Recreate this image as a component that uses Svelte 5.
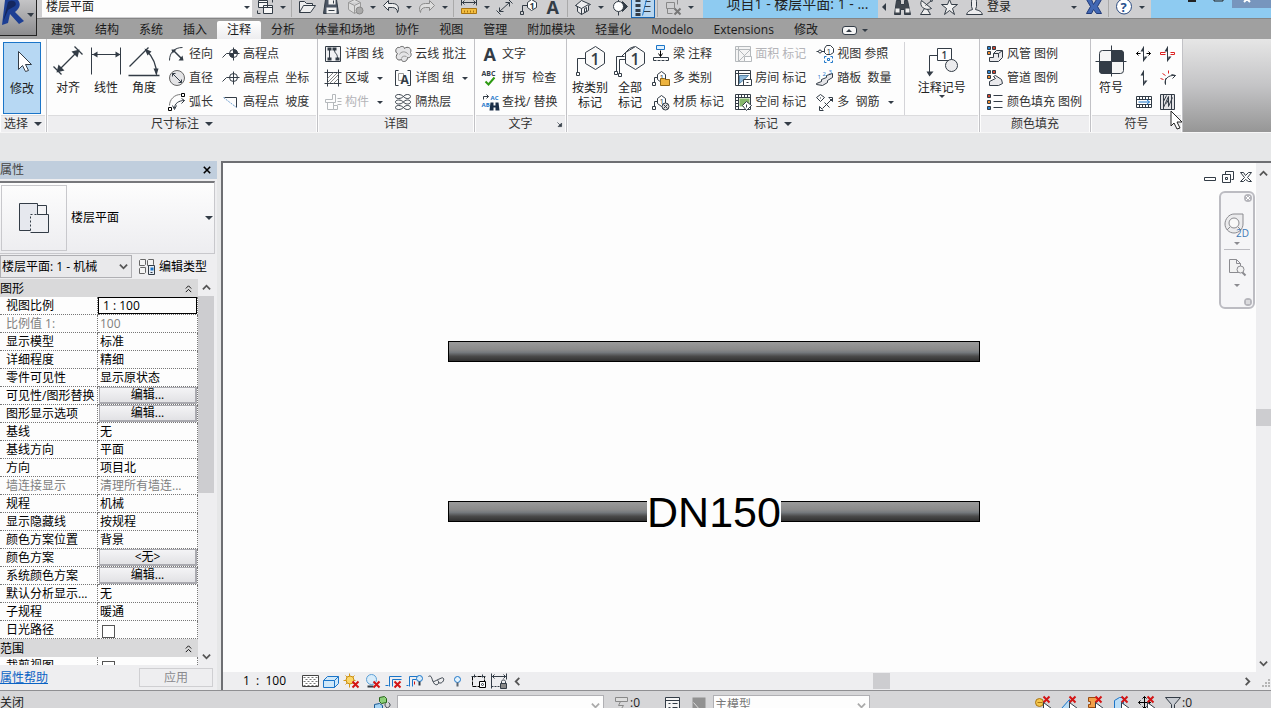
<script>
    // Inner markup of the 18x18 icons
    const icons = {
        radial: '<path d="M1 15C1 7 6 2 14 2"/><path d="M5 5l9 9" stroke-width="1.5"/><path d="M3 4l5 0-4 4zM15 15h-5l4-5z" fill="#333c46" stroke="none"/>',
        diameter: '<circle cx="8.5" cy="8.5" r="7.5" fill="#e4e4e6" stroke="#666"/><path d="M4 4l9 9M4 7V4h3M13 10v3h-3"/>',
        arc: '<path d="M1 12C1 6 6 1 12 1" stroke="#777"/><path d="M6 15c0-5 4-8 10-8M4 12l2 4 2-4M13 5l3 2-3 3"/><path d="M0 14h3v3H0zM13 0h3v3h-3z" fill="#fff" stroke="#000"/>',
        spot: '<path d="M0 12l4-4h13M11 2v13"/><circle cx="11" cy="8" r="4" fill="#fff"/><path d="M11 4a4 4 0 0 1 4 4H11zM11 12a4 4 0 0 1-4-4H11z" fill="#333c46"/>',
        spotxy: '<path d="M0 12l4-4h13M11 2v13"/><circle cx="11" cy="8" r="4"/>',
        slope: '<path d="M2 4h12v10"/><path d="M1 4l13 10" stroke="#6f9fd0" stroke-dasharray="2 1"/>',
        detailline: '<path d="M1 1h15v15H1z" fill="#f1f1f3"/><path d="M5 4v9M10 4c0 5 3 3 3 9"/><path d="M3 2h4v3H3zM3 12h4v3H3zM8 2h4v3H8zM11 12h4v3h-4z" fill="#333c46" stroke="none"/>',
        region: '<path d="M3 0v17M14 0v17M0 3h17M0 14h17"/><path d="M3 9l6-6M3 13L13 3M5 14l9-9M9 14l5-5" stroke="#888"/>',
        component: '<path d="M8 1h3v8H1V6h7zM13 5h4M13 8h4M13 11h4M3 9v7h6V9M9 12h4v4H9"/>',
        cloud: '<path d="M3 8C0 7 1 1 5 2c2-2 5-1 5 1 3-3 8 0 6 4 2 3-1 6-3 5 0 5-6 5-6 2-4 2-7-2-4-6z" fill="#e4e4e6" stroke="#666"/><path d="M5 9c1-3 6-4 9 0M7 13c0-2 3-3 5-2" stroke="#999"/>',
        group: '<path d="M4 1H1v15h3M13 1h3v15h-3"/><path d="M4 4h5v7H4z" stroke="#999"/><text x="6" y="14" font-size="12" font-weight="700" fill="#333c46" stroke="none">A</text>',
        insul: '<path d="M4 1c-4 0-4 4 0 4 5 0 5-4 9-4 4 0 4 4 0 4-4 0-4-4-9-4M4 6.500c-4 0-4 4 0 4 5 0 5-4 9-4 4 0 4 4 0 4-4 0-4-4-9-4M4 12c-4 0-4 4 0 4 5 0 5-4 9-4 4 0 4 4 0 4-4 0-4-4-9-4"/>',
        letter: '<text x="2" y="15" font-size="18" font-weight="700" fill="#333c46" stroke="none">A</text>',
        spell: '<text x="0" y="6" font-size="7" font-weight="700" fill="#333c46" stroke="none">ABC</text><path d="M4 12l3 3 6-7" stroke="#2d9a12" stroke-width="2"/>',
        find: '<path d="M2 6V3h5M5 1l2 2-2 2"/><g stroke="none" font-weight="700" fill="#1b75c8"><text x="9" y="6" font-size="6">AC</text><text x="0" y="13" font-size="6">AB</text></g><path d="M9 9h3v3h2V9h3l1 8h-4v-3h-2v3H8z" fill="#1c2f48" stroke="none"/>',
        beam: '<path d="M4 0h8v4H4z" fill="#e2f1fc" stroke="#1b75c8"/><path d="M8 5v6M6 8l2 3 2-3" stroke="#000"/><path d="M1 15h15" stroke-dasharray="3 1"/><path d="M1 12h15v3M1 12v3"/>',
        multi: '<path d="M2 13V8h4M0 13h3v3H0z"/><path d="M5 5l4-3 4 3v5l-4 3-4-3z" fill="#fff"/><text x="7" y="10" font-size="8" fill="#333c46" stroke="none">1</text><path d="M8 9h4l1 1h4v6H8z" fill="#edb33e" stroke="#8e6514"/>',
        material: '<path d="M2 13V8h4M0 13h3v3H0z"/><path d="M5 5l4-3 4 3v5l-4 3-4-3z" fill="#fff"/><text x="7" y="10" font-size="8" fill="#333c46" stroke="none">1</text><circle cx="13" cy="13" r="3.500" fill="#ddd"/><path d="M11 11l4 4M15 11l-4 4"/>',
        area: '<path d="M1 1h15v15H1zM1 4h15M4 1v15M4 4l12 12M16 4L4 16" fill="#e4e4e4"/><path d="M10 11h7v5h-7z" fill="#fff"/>',
        room: '<path d="M1 1h15v15H1z" fill="#fff"/><path d="M4 1v15M1 4h15"/><path d="M5 6h9l-9 8z" fill="#8db8da" stroke="#5a86a8"/><path d="M9 10h8v6H9z" fill="#fff"/><path d="M12 13h2"/>',
        space: '<path d="M1 1h15v15H1z" fill="#fff"/><path d="M4 1v15M1 4h15M1 7h3M1 10h3M1 13h3M7 1v3M10 1v3M13 1v3"/><path d="M5 5h10v8H5z" fill="#86b66b" stroke="none"/><path d="M12 8l5 4-5 5-4-5z" fill="#fff"/><path d="M12 11v3"/>',
        viewref: '<path d="M0 6h2M5 6h3"/><circle cx="3.500" cy="6" r="1.500"/><path d="M10 0h4l3 3v4l-3 2h-4L8 7V3z" fill="#fff"/><text x="10" y="8" font-size="8" fill="#333c46" stroke="none">1</text><path d="M8 13v-2h2M14 11h2v2M16 15v2h-2M10 17H8v-2M11 13h2v2h-2z" stroke="#1b75c8"/>',
        tread: '<path d="M0 14l5-2v-2l5-2V6l6-2v4l-5 3v2l-5 3-6-1z" fill="#e6e6e9"/><g font-size="6" fill="#1b75c8" stroke="none"><text x="1" y="9">1</text><text x="6" y="6">2</text><text x="12" y="4">3</text></g>',
        rebar: '<path d="M4 1l4 3-4 4-4-4zM6 15L16 5M3 13l3 3M13 5l3 3M8 9l5 5M4 4v1"/><path d="M12 4l4 0-0 4M3 13v4h4"/>',
        duct: '<path d="M1 1h3v3H1z" fill="#2a83cf"/><path d="M6 1h3v3H6z" fill="#d2452f"/><path d="M1 6h3v3H1z" fill="#ef8b2c"/><path d="M7 8l3-3h6v7l-4 4H3v-4h4zM7 8h5v4M12 8l4-3" fill="#e9e9ec"/>',
        pipe: '<path d="M1 1h3v3H1z" fill="#2a83cf"/><path d="M6 1h3v3H6z" fill="#d2452f"/><path d="M1 6h3v3H1z" fill="#ef8b2c"/><path d="M3 12l6-3-2-2 2-1 6 4 1 4-4 2H3z" fill="#e9e9ec"/>',
        legend: '<path d="M1 1h3v3H1z" fill="#d2452f"/><path d="M1 7h3v3H1z" fill="#ef8b2c"/><path d="M1 13h3v3H1z" fill="#2a83cf"/><path d="M7 2h9M7 8h9M7 14h9"/>',
        stairs: '<path d="M8 1v15"/><path d="M8 1v5H5zM9 11h3l-4 5z" fill="#333c46" stroke="none"/><path d="M5 8H1M3 6L1 8l2 2M11 8h4M13 6l2 2-2 2" stroke="#000"/>',
        stairs2: '<path d="M8 1v15"/><path d="M8 1v5H5zM9 11h3l-4 5z" fill="#333c46" stroke="none"/><path d="M6 7H1v2h5M11 7h4v2h-4" stroke="#d22"/>',
        span: '<path d="M8 1v15"/><path d="M8 1v5H5zM9 11h3l-4 5z" fill="#333c46" stroke="none"/>',
        spanred: '<path d="M6 15c-2-5 3-10 10-9M6 15V9M13 9l3-3-4-1"/><path d="M1 9l3 1M3 4l3 2M9 1v3" stroke="#d22"/>',
        path: '<path d="M1 3h15v11H1z" fill="#fff"/><path d="M1 6h15M1 11h15M4 3v3M7 3v3M10 3v3M13 3v3M4 11v3M7 11v3M10 11v3M13 11v3"/><path d="M3 8.500h11M11 6l3 2.500-3 2.500" stroke="#1b75c8"/>',
        fabric: '<path d="M1 1h14v15H1z" fill="#e2e2e5"/><path d="M4 1v15M12 1v15M4 14L9 3v10l4-9M7 10l2-4M4 8l3-6"/>',
        // quick access
        windows: '<path d="M2 2h9v7H2zM7 7h9v8H7z" fill="#f7f7f7"/><path d="M2 4h9M7 9h9M14 1h2v3M1 12v3h3"/>',
        open: '<path d="M1 14V3h5l2 2h6v2M1 14l4-7h12l-5 7z" fill="#eee"/>',
        save: '<path d="M3 1h11l2 14H1z" fill="#4b5563"/><path d="M6 1h7v5H6zM4 9h10v6H4z" fill="#f2f2f2" stroke="none"/><path d="M6 12h6M11 2v3"/>',
        sync: '<path d="M8 1l6 3v7l-6 4-6-4V4zM2 4l6 3 6-3M8 7v8" fill="#ddd" stroke="#999"/><circle cx="13" cy="12" r="3.500" fill="#aaa" stroke="#888"/>',
        undo: '<path d="M1 7l5-5v3h4c6 0 7 5 5 9 0-3-2-5-5-5H6v3z" fill="#eee"/>',
        redo: '<path d="M16 7l-5-5v3H7C1 5 0 10 2 14c0-3 2-5 5-5h4v3z" fill="#ddd" stroke="#8a8a8a"/>',
        ruler: '<path d="M1 4h15M1 1v6M16 1v6M4 2L2 4l2 2M13 2l2 2-2 2"/><path d="M1 10h15v5H1z" fill="#f3bd3f" stroke="#a87411"/><path d="M4 12v2M7 12v2M10 12v2M13 12v2" stroke="#a87411"/>',
        aligned: '<path d="M0 12l4 4M12 1l4 4M3 13L13 4M3 9v4h4M9 4h4v4"/>',
        tag: '<path d="M2 13V7h5M0 13h3v3H0z"/><path d="M7 4l4-3 5 3v5l-5 3-4-3z" fill="#fff"/><text x="9" y="10" font-size="9" font-weight="700" fill="#333c46" stroke="none">1</text>',
        house: '<path d="M1 7l6-5 9 4-2 1v5l-7 4-4-3V8z" fill="#ececee"/><path d="M1 7l6 3 7-4M7 10v6M10 10v4l2-1v-4z"/>',
        section: '<path d="M8 1v3M8 13v4"/><path d="M12 3l5 5-5 5z" fill="#333c46"/><circle cx="8" cy="8" r="5" fill="#fff"/>',
        thin: '<path d="M1 2h5M1 7h5M1 12h5M1 16h5" stroke-width="3"/><path d="M11 3h5M10 8h6M9 13h7"/><path d="M12 1L8 17" stroke="#1b75c8"/>',
        closehidden: '<path d="M2 4h8v6H2zM5 1h8v5M3 10v5h5" stroke="#888"/><path d="M10 10l6 6M16 10l-6 6" stroke="#777" stroke-width="2"/>',
        binoc: '<path d="M3 2h4v4h4V2h3l3 14h-6v-5H7v5H1z" fill="#40474f"/><path d="M2 10h4v4H2zM12 10h4v4h-4z" fill="#eee" stroke="none"/>',
        dish: '<path d="M4 2c-3 6 4 11 10 8zM8 7l6-5M7 10l-4 6h10l-3-5" fill="#eee"/><circle cx="14" cy="2" r="1"/>',
        star: '<path d="M8 1l2 5h6l-5 4 2 6-5-4-5 4 2-6-5-4h6z" fill="#f1f1f1"/>',
        person: '<path d="M6 3c0-4 5-4 5 0v5l-1 3c4 1 6 2 7 5H1c1-3 3-4 6-5L6 8z" fill="#ececee"/>',
        exchange: '<path d="M1 1h5l2 5 3-5h5l-4 7 4 7h-5l-3-4-2 4H1l4-7z" fill="#4268b4" stroke="#203a78"/>',
        help: '<circle cx="8.500" cy="8" r="7.500" fill="#fff" stroke="#2a4a80"/><text x="5" y="13" font-size="13" font-weight="700" fill="#27508f" stroke="none">?</text>',
        // palette
        edittype: '<path d="M1 2l1-1h5v5l-1 1H1zM9 2l1-1h5v5l-1 1H9zM1 10l1-1h5v5l-1 1H1z" fill="#f4f4f4" stroke="#666"/><path d="M10 7h6v9h-6z" fill="#e7edf5"/><path d="M12 9h3v3h-3z" fill="#1b75c8" stroke="none"/><path d="M12 14h2"/>',
        // view control bar
        coarse: '<path d="M1 3h16v11H1z" fill="#fff" stroke="#444"/><path d="M2 5h14M2 9h14M2 13h14" stroke="#777" stroke-dasharray="2 2"/><path d="M4 7h12M4 11h12" stroke="#777" stroke-dasharray="2 2"/>',
        box: '<path d="M1 8l4-4h11v7l-4 4H1z" fill="#cfe8fa" stroke="#1b75c8"/><path d="M1 8h11v7M12 8l4-4" stroke="#1b75c8"/>',
        sun: '<path d="M6 1v14M0 8h12M2 3l9 9M11 3L2 12" stroke="#d69a1a"/><circle cx="6.500" cy="7.500" r="4" fill="#fbd769" stroke="#c98d10"/><path d="M9 9l6 6M15 9l-6 6" stroke="#d31515" stroke-width="2"/>',
        shadow: '<circle cx="7" cy="7" r="5" fill="#d8ecfa" stroke="#5b9fd6"/><path d="M3 14h6" stroke-width="2"/><path d="M9 9l6 6M15 9l-6 6" stroke="#d31515" stroke-width="2"/>',
        crop: '<path d="M0 13h3M4 14V4h12M7 14V7h9" stroke="#1b75c8"/><path d="M9 9l6 6M15 9l-6 6" stroke="#d31515" stroke-width="2"/>',
        cropshow: '<path d="M0 13h2M3 14V4h8M6 14V7h4" stroke="#1b75c8"/><circle cx="13" cy="6" r="3" fill="#d8ecfa" stroke="#1b75c8"/><path d="M8 9v3" stroke="#d31515"/><path d="M13 9v4" stroke-width="2"/>',
        glasses: '<path d="M1 4c3-2 3 2 5 6s6 2 5-1-3 0-5 0M11 10c3 2 6-2 5-4s-4 1-6 1"/>',
        bulb: '<circle cx="9" cy="7" r="3" fill="#e5f3fd" stroke="#1b75c8"/><path d="M9 10v4" stroke="#5a6570" stroke-width="2"/>',
        temp: '<path d="M3 4h12v10H3z" stroke="#000" stroke-dasharray="4 1"/><path d="M10 9h6v6h-6z" fill="#fff" stroke="#000"/><circle cx="13" cy="12" r="1"/><path d="M2 4h4M12 4h4M5 2v3M13 2v3"/>',
        lockdim: '<path d="M1 1v15M16 1v6M1 4h15M4 2L2 4l2 2M13 2l2 2-2 2"/><path d="M1 14h8" stroke-dasharray="2 1"/><path d="M10 11h6v5h-6z" fill="#888"/><path d="M11 11V9c0-2 4-2 4 0v2"/>',
        // status bar
        worksets: '<path d="M6 2l5-1 2 2v4l-5 1-2-2z" fill="#8ccf78" stroke="#28641b"/><path d="M1 9l5-1 3 2v6l-5 1-3-2z" fill="#a6d3f2" stroke="#1b5b95"/><path d="M12 8c-2 3 3 4 3 8M15 7c3 2 1 5-1 5"/>',
        editable: '<path d="M3 2h12v4H3zM8 6l-2 4h5l-4 6" stroke="#888" fill="#ddd"/>',
        design: '<path d="M2 2h14v14H2z" fill="#f5f5f5"/><path d="M2 5h14M5 8h2M9 8h5M5 12h2M9 12h5"/>',
        addset: '<path d="M3 2h13v15H3z" fill="#919191" stroke="none"/><path d="M4 7l7 8" stroke="#ddd"/>',
        link: '<circle cx="5" cy="7" r="4" fill="#f5c64c" stroke="#a87411"/><path d="M3 7h5" stroke="#a87411"/>',
        underlay: '<path d="M1 13l8-9v9z" fill="#b9dcf5" stroke="#1b75c8"/>',
        pinned: '<path d="M2 2h9v4H9v3h2v3H2V9h2V6H2z" fill="#f2a04a" stroke="#9a4c10"/>',
        face: '<path d="M2 5l5-3h4v13H2z" fill="#b9dcf5" stroke="#1b75c8"/>',
        drag: '<path d="M6 1v12M0 7h12M4 3l2-2 2 2M4 11l2 2 2-2M2 5L0 7l2 2M10 5l2 2-2 2" stroke="#000"/>',
        filter: '<path d="M1 2h15l-6 7v8l-3-2V9z" fill="#c7cbd1"/>',
        mark: '<path d="M9 1l6 6M15 1L9 7" stroke="#d31515" stroke-width="2"/><path d="M9 7v10l3-3 2 4 1-1-1-4h3z" fill="#fff"/>',
        zoompage: '<path d="M1 1h7l4 4v9H1zM8 1v4h4" fill="#f2f2f2" stroke="#8b8b90"/><circle cx="12" cy="11" r="3.500" fill="#f2f2f2" stroke="#8b8b90"/><path d="M14 14l3 3" stroke="#8b8b90" stroke-width="2"/>'
    };

    // Inner markup of the 32x32 icons
    const bigIcons = {
        modify: '<path d="M12 5v18l4-4 3 6 3-1-3-6h6z" fill="#fff"/>',
        align: '<path d="M1 21l8 8M22 1l8 8M6 25L25 6" stroke-width="1.3"/><path d="M4 27l2-8 6 6zM27 4l-8 2 6 6z" fill="#333c46" stroke="none"/>',
        linear: '<path d="M1 2v27M30 2v27M1 9h29"/><path d="M2 9l5-3v6zM30 9l-5-3v6z" fill="#333c46" stroke="none"/>',
        angle: '<path d="M1 21L20 2M0 30h31M18 5c6 6 10 14 10 24" stroke-width="1.3"/><path d="M16 3l7 3-4 4zM28 30l-3-7h5z" fill="#333c46" stroke="none"/>',
        bycat: '<path d="M3 27V13h9M2 27h3v3H2z"/><path d="M11 7l10-6 9 6v11l-9 6-10-6z" fill="#fafafa"/><text x="16" y="19" font-size="16" font-weight="600" fill="#333c46" stroke="none">1</text>',
        all: '<path d="M2 27V11h8M5 28V14h8M7 11l8-8 5-2"/><path d="M0 26h3v3H0zM4 28h3v3H4z" fill="#fff"/><path d="M11 7l10-6 9 6v11l-9 6-10-6z" fill="#fafafa"/><text x="16" y="19" font-size="16" font-weight="600" fill="#333c46" stroke="none">1</text>',
        keynote: '<path d="M3 27V10h8"/><path d="M3 31l-3-5h7z" fill="#333c46" stroke="none"/><path d="M11 3h14v12H11z" fill="#fff"/><text x="15" y="13" font-size="10" font-weight="600" fill="#333c46" stroke="none">1</text><circle cx="25" cy="20" r="6" fill="#ececee"/>',
        symbol: '<rect x="4" y="5" width="24" height="23" rx="3" fill="#f5f5f5"/><path d="M16 5h9q3 0 3 3v8H16zM4 16h12v12H7q-3 0-3-3z" fill="#333c46"/><path d="M16 0v31M0 16h31"/>',
        view: '<path d="M1 1h18v27H1z" fill="#e6e8ee"/><path d="M19 3h9v10" fill="#f2f2f4"/><path d="M12 12h18v18H12z" fill="#eeeff3" stroke="none"/><path d="M30 12v18H12M19 12h11"/><path d="M12 28V12h8M19 3v9" stroke-dasharray="2 2"/>'
    };

    const quick = [
        { icon: 'windows', menu: true }, 'sep',
        { icon: 'open' }, { icon: 'save' }, { icon: 'sync', menu: true },
        { icon: 'undo', menu: true }, { icon: 'redo', menu: true }, 'sep',
        { icon: 'ruler', menu: true }, { icon: 'aligned' }, { icon: 'tag' }, { icon: 'letter' }, 'sep',
        { icon: 'house', menu: true }, { icon: 'section' }, { icon: 'thin', on: true }, 'sep',
        { icon: 'closehidden', menu: true }
    ];

    const tabs = ['建筑', '结构', '系统', '插入', '注释', '分析', '体量和场地', '协作', '视图', '管理', '附加模块', '轻量化', 'Modelo', 'Extensions', '修改'];
    let activeTab = '注释';

    const dims = [
        [['radial', '径向'], ['diameter', '直径'], ['arc', '弧长']],
        [['spot', '高程点'], ['spotxy', '高程点  坐标'], ['slope', '高程点  坡度']]
    ];
    const details = [
        [['detailline', '详图 线'], ['region', '区域', 'menu'], ['component', '构件', 'menu off']],
        [['cloud', '云线 批注'], ['group', '详图 组', 'menu'], ['insul', '隔热层']]
    ];
    const texts = [[['letter', '文字'], ['spell', '拼写  检查'], ['find', '查找/ 替换']]];
    const tags = [
        [['beam', '梁 注释'], ['multi', '多 类别'], ['material', '材质 标记']],
        [['area', '面积 标记', 'off'], ['room', '房间 标记'], ['space', '空间 标记']],
        [['viewref', '视图 参照'], ['tread', '踏板  数量'], ['rebar', '多  钢筋', 'menu']]
    ];
    const fills = [[['duct', '风管 图例'], ['pipe', '管道 图例'], ['legend', '颜色填充 图例']]];
    const symbols = ['stairs', 'stairs2', 'span', 'spanred', 'path', 'fabric'];

    const props = [
        { group: '图形' },
        { name: '视图比例', value: '1 : 100', kind: 'input' },
        { name: '比例值 1:', value: '100', off: true },
        { name: '显示模型', value: '标准' },
        { name: '详细程度', value: '精细' },
        { name: '零件可见性', value: '显示原状态' },
        { name: '可见性/图形替换', value: '编辑...', kind: 'button' },
        { name: '图形显示选项', value: '编辑...', kind: 'button' },
        { name: '基线', value: '无' },
        { name: '基线方向', value: '平面' },
        { name: '方向', value: '项目北' },
        { name: '墙连接显示', value: '清理所有墙连...', off: true },
        { name: '规程', value: '机械' },
        { name: '显示隐藏线', value: '按规程' },
        { name: '颜色方案位置', value: '背景' },
        { name: '颜色方案', value: '<无>', kind: 'button' },
        { name: '系统颜色方案', value: '编辑...', kind: 'button' },
        { name: '默认分析显示...', value: '无' },
        { name: '子规程', value: '暖通' },
        { name: '日光路径', kind: 'check' },
        { group: '范围' },
        { name: '裁剪视图', kind: 'check' }
    ];

    const viewTools = ['coarse', 'box', 'sun', 'shadow', 'crop', 'cropshow', 'glasses', 'bulb', 'temp', 'lockdim'];
    const selectTools = ['link', 'underlay', 'pinned', 'face', 'drag'];
</script>

{#snippet icon(name)}
    <svg class="icon" viewBox="-0.5 -0.5 18 18" aria-hidden="true">{@html icons[name]}</svg>
{/snippet}

{#snippet arrow(d)}
    <svg class="chevron" viewBox="0 0 10 10" aria-hidden="true"><path {d} /></svg>
{/snippet}

{#snippet big(name, lines, menu)}
    <button class="big">
        <svg viewBox="-0.5 -0.5 32 32" aria-hidden="true">{@html bigIcons[name]}</svg>
        {#each lines as line}<span>{line}</span>{/each}
        {#if menu}<i class="caret small"></i>{/if}
    </button>
{/snippet}

{#snippet columns(cols)}
    {#each cols as col}
        <div class="tools">
            {#each col as [name, label, flags = '']}
                <button class="tool" disabled={flags.includes('off')}>
                    {@render icon(name)}<span>{label}</span>
                    {#if flags.includes('menu')}<i class="caret small"></i>{/if}
                </button>
            {/each}
        </div>
    {/each}
{/snippet}

<div class="app">
    <header>
        <button class="app-button" aria-label="R">
            <svg viewBox="0 0 36 35" aria-hidden="true">
                <path d="M5 0h13c3 4 2 8-3 12l9 9-5 3-9-10-2 9-6 2z" fill="#1d3f94" />
                <path d="M8 2c4-3 10 0 7 4l-7 4-5 12z" fill="#14275f" />
                <path d="M27 13h7l-3 4z" fill="#333c46" />
            </svg>
        </button>
        <div class="bars">
            <div class="quick">
                <div class="search">
                    <select aria-label="视图"><option>楼层平面</option></select>
                    <i class="caret small"></i>
                </div>
                {#each quick as q}
                    {#if q === 'sep'}
                        <span class="sep"></span>
                    {:else}
                        <button class="q" class:on={q.on} aria-label={q.icon}>{@render icon(q.icon)}</button>
                        {#if q.menu}<button class="drop" aria-label="menu"><i class="caret small"></i></button>{/if}
                    {/if}
                {/each}
                <div class="title">项目1 - 楼层平面: 1 - ...</div>
                <button class="drop" aria-label="back"><i class="caret back"></i></button>
                {#each ['binoc', 'dish', 'star', 'person'] as name}
                    <button class="q" aria-label={name}>{@render icon(name)}</button>
                {/each}
                <button class="login"><span>登录</span><i class="caret small"></i></button>
                <button class="q" aria-label="exchange">{@render icon('exchange')}</button>
                <span class="sep"></span>
                <button class="q" aria-label="help">{@render icon('help')}</button>
                <button class="drop" aria-label="menu"><i class="caret small"></i></button>
                <div class="window">
                    <button aria-label="最小化"><svg viewBox="0 0 10 10"><path d="M1-1h8v3H1z" fill="#222" stroke="none" /></svg></button>
                    <button aria-label="最大化"><svg viewBox="0 0 10 10"><path d="M0-4h9v5H0z" fill="none" stroke="#222" /></svg></button>
                    <button class="close" aria-label="关闭"><svg viewBox="0 0 10 10"><path d="M2-4l6 6M8-4L2 2" stroke="#fff" stroke-width="2" /></svg></button>
                </div>
            </div>
            <nav class="tabs">
                {#each tabs as tab}
                    <button class:active={tab === activeTab} on:click={() => (activeTab = tab)}>{tab}</button>
                {/each}
                <button class="fold" aria-label="fold"><b><i class="caret up"></i></b><i class="caret small"></i></button>
            </nav>
        </div>
    </header>

    <div class="ribbon">
        <section class="panel select">
            <div class="body">{@render big('modify', ['修改'])}</div>
            <h2>选择 <i class="caret"></i></h2>
        </section>
        <section class="panel dim">
            <div class="body">
                <div class="bigs">
                    {@render big('align', ['对齐'])}{@render big('linear', ['线性'])}{@render big('angle', ['角度'])}
                </div>
                {@render columns(dims)}
            </div>
            <h2>尺寸标注 <i class="caret"></i></h2>
        </section>
        <section class="panel detail">
            <div class="body">{@render columns(details)}</div>
            <h2>详图</h2>
        </section>
        <section class="panel text">
            <div class="body">{@render columns(texts)}</div>
            <h2>文字
                <svg class="launch" viewBox="0 0 10 10" aria-hidden="true"><path d="M2 2l5 5M8 3v5H3z" fill="#333c46" /></svg>
            </h2>
        </section>
        <section class="panel tag">
            <div class="body">
                <div class="bigs">
                    {@render big('bycat', ['按类别', '标记'])}{@render big('all', ['全部', '标记'])}
                </div>
                {@render columns(tags)}
                <div class="note">{@render big('keynote', ['注释记号'], true)}</div>
            </div>
            <h2>标记 <i class="caret"></i></h2>
        </section>
        <section class="panel fill">
            <div class="body">{@render columns(fills)}</div>
            <h2>颜色填充</h2>
        </section>
        <section class="panel symbol">
            <div class="body">
                {@render big('symbol', ['符号'])}
                <div class="grid">
                    {#each symbols as name}
                        <button class="q" aria-label={name}>{@render icon(name)}</button>
                    {/each}
                </div>
            </div>
            <h2>符号</h2>
            <svg class="cursor" viewBox="0 0 13 20" aria-hidden="true"><path d="M1 1v15l3-3 3 6 3-1-3-6h5z" fill="#fff" stroke="#222" /></svg>
        </section>
    </div>
    <div class="options"></div>

    <main>
        <aside>
            <div class="caption"><span>属性</span><button aria-label="关闭">
                <svg viewBox="0 0 10 10"><path d="M1 1l8 8M9 1L1 9" stroke="#000" stroke-width="2" /></svg>
            </button></div>
            <button class="type">
                <span class="thumb"><svg viewBox="-0.5 -0.5 32 32">{@html bigIcons.view}</svg></span>
                <span class="type-name">楼层平面</span><i class="caret"></i>
            </button>
            <div class="instance">
                <div class="pick">
                    <select aria-label="实例"><option>楼层平面: 1 - 机械</option></select>
                    {@render arrow('M1 3l4 4 4-4')}
                </div>
                <button>{@render icon('edittype')}<span>编辑类型</span></button>
            </div>
            <div class="list">
                <div class="rows">
                    <table>
                        <colgroup><col class="names" /><col /></colgroup>
                        <tbody>
                            {#each props as p, i}
                                {#if p.group}
                                    <tr class="group"><th colspan="2"><div>{p.group}{@render arrow('M2 5l3-3 3 3M2 9l3-3 3 3')}</div></th></tr>
                                {:else}
                                    <tr class:off={p.off}>
                                        <td><label for="p{i}">{p.name}</label></td>
                                        <td class={p.kind}>
                                            {#if p.kind === 'input'}
                                                <input id="p{i}" value={p.value} />
                                            {:else if p.kind === 'button'}
                                                <button id="p{i}">{p.value}</button>
                                            {:else if p.kind === 'check'}
                                                <input id="p{i}" type="checkbox" />
                                            {:else}
                                                <output id="p{i}">{p.value}</output>
                                            {/if}
                                        </td>
                                    </tr>
                                {/if}
                            {/each}
                        </tbody>
                    </table>
                </div>
                <div class="scroll">
                    {@render arrow('M1 7l4-4 4 4')}
                    <div class="track"><div class="thumb-long"></div></div>
                    {@render arrow('M1 3l4 4 4-4')}
                </div>
            </div>
            <div class="foot"><a href="#help">属性帮助</a><button disabled>应用</button></div>
        </aside>

        <div class="view">
            <div class="upper">
                <div class="canvas">
                    <div class="pipe first"></div>
                    <div class="pipe second"><span>DN150</span></div>
                    <div class="view-buttons">
                        <button aria-label="最小化"><svg viewBox="-0.5 -0.5 14 12"><path d="M1 6h11v3H1z" fill="#fff" /></svg></button>
                        <button aria-label="还原"><svg viewBox="-0.5 -0.5 14 12"><path d="M4 3V0h8v8h-2M1 3h8v8H1zM4 6h2v2H4z" /></svg></button>
                        <button aria-label="关闭"><svg viewBox="-0.5 -0.5 14 12"><path d="M1 1h3l2 3 3-3h3L8 6l4 4H9L6 8l-2 2H1l4-4z" /></svg></button>
                    </div>
                    <div class="navbar">
                        <svg class="dot" viewBox="0 0 10 10"><circle cx="5" cy="5" r="4" /><path d="M3 3l4 4M7 3L3 7" stroke="#fff" /></svg>
                        <button aria-label="2D">
                            <svg viewBox="0 0 26 26">
                                <path d="M10 1h9v10c0 5-4 9-9 9s-9-4-9-9 4-10 9-10z" fill="#ebebed" stroke="#8b8b90" />
                                <circle cx="10" cy="10" r="5" fill="#f8f8f8" stroke="#8b8b90" />
                                <path d="M6 14l-3 3M14 14l3 3" stroke="#8b8b90" />
                                <text x="12" y="24" font-size="10" fill="#3d79b5">2D</text>
                            </svg>
                        </button>
                        <i class="caret small"></i>
                        <hr />
                        <button class="zoom" aria-label="缩放">{@render icon('zoompage')}</button>
                        <i class="caret small"></i>
                        <svg class="dot end" viewBox="0 0 10 10"><circle cx="5" cy="5" r="4" /><path d="M3 4h4M3 6h4" stroke="#fff" /></svg>
                    </div>
                </div>
                <div class="scroll">
                    {@render arrow('M1 7l4-4 4 4')}
                    <div class="track middle"><div class="thumb-short"></div></div>
                    {@render arrow('M1 3l4 4 4-4')}
                </div>
            </div>
            <div class="view-bar">
                <span class="scale">1  :  100</span>
                {#each viewTools as name}
                    <button aria-label={name}>{@render icon(name)}</button>
                {/each}
                {@render arrow('M7 1L3 5l4 4')}
                <div class="h-track"><div class="h-thumb"></div></div>
                {@render arrow('M3 1l4 4-4 4')}
                <svg class="grip" viewBox="0 0 10 10"><path d="M7 1h2M4 4h2M7 4h2M1 7h2M4 7h2M7 7h2" stroke="#b5b5b5" stroke-width="2" /></svg>
            </div>
        </div>
    </main>

    <footer>
        <span class="message">关闭</span>
        <button aria-label="worksets">{@render icon('worksets')}</button>
        <div class="pick workset">
            <select aria-label="工作集"><option></option></select>
            {@render arrow('M1 3l4 4 4-4')}
        </div>
        <button class="count">{@render icon('editable')}<span>:0</span></button>
        <button aria-label="design">{@render icon('design')}</button>
        <button aria-label="addset">{@render icon('addset')}</button>
        <div class="pick model">
            <select aria-label="设计选项"><option>主模型</option></select>
            {@render arrow('M1 3l4 4 4-4')}
        </div>
        <div class="selection">
            {#each selectTools as name}
                <button aria-label={name}><svg class="icon" viewBox="-0.5 -0.5 18 18">{@html icons[name] + icons.mark}</svg></button>
            {/each}
            <button class="count">{@render icon('filter')}<span>:0</span></button>
        </div>
    </footer>
</div>

<style>
    :global(body) {
        margin: 0;
        background: #e6e7e8;
    }

    .app {
        display: flex;
        flex-direction: column;
        height: 100vh;
        overflow: hidden;
        font: 12px/16px 'Open Sans', 'Noto Sans CJK SC', sans-serif;
        color: #222;
    }

    button,
    select,
    input {
        box-sizing: border-box;
        margin: 0;
        padding: 0;
        border: 0;
        border-radius: 0;
        background: none;
        font: inherit;
        color: inherit;
    }

    select {
        appearance: none;
    }

    svg {
        display: block;
        flex: none;
        fill: none;
        stroke: #333c46;
        overflow: visible;
    }

    .icon {
        width: 18px;
        height: 18px;
    }

    .chevron {
        width: 9px;
        height: 9px;
        stroke: #555;
        stroke-width: 2;
    }

    .caret {
        display: inline-block;
        flex: none;
        border: 4px solid transparent;
        border-top-color: #333c46;
        border-bottom: 0;
    }

    .caret.small {
        border-width: 3px;
        border-bottom: 0;
    }

    .caret.back {
        border: 4px solid transparent;
        border-right-color: #333c46;
        border-left: 0;
    }

    .caret.up {
        border: 3px solid transparent;
        border-bottom-color: #333c46;
        border-top: 0;
    }

    /* title bar and tabs */
    header {
        display: flex;
        flex: none;
        height: 39px;
        background: #a0a0a0;
    }

    .app-button {
        flex: none;
        width: 37px;
        height: 36px;
        border: solid #222;
        border-width: 0 1px 1px 0;
        background: linear-gradient(#c4c4c6, #8c8c8e);
    }

    .app-button svg {
        width: 36px;
        height: 35px;
        stroke: none;
    }

    .bars {
        flex: 1;
        min-width: 0;
    }

    .quick {
        display: flex;
        align-items: center;
        box-sizing: border-box;
        height: 19px;
        padding: 0 0 4px 5px;
        border-bottom: 1px solid #858585;
        background: #cfcfd1;
        overflow: hidden;
    }

    .search {
        display: flex;
        flex: none;
        align-items: center;
        width: 210px;
        height: 20px;
        margin-right: 1px;
        background: #fdfdfd;
    }

    .search select {
        flex: 1;
        padding-left: 4px;
    }

    .search .caret {
        margin-right: 2px;
    }

    .q {
        display: flex;
        flex: none;
        align-items: center;
        justify-content: center;
        width: 24px;
        height: 20px;
    }

    .q.on {
        height: 22px;
        border: 1px solid #1b66b0;
        background: #b9d7f0;
    }

    .drop {
        display: flex;
        flex: none;
        justify-content: center;
        width: 12px;
    }

    .sep {
        flex: none;
        width: 1px;
        height: 20px;
        margin: 0 3px 0 2px;
        background: #aaa;
    }

    .title {
        flex: 1;
        align-self: stretch;
        height: 18px;
        margin-left: 6px;
        padding-left: 14px;
        background: #8ecbf1;
        font-size: 14px;
        line-height: 8px;
        text-align: center;
        white-space: nowrap;
    }

    .login {
        display: flex;
        flex: none;
        align-items: center;
        justify-content: space-between;
        width: 96px;
        padding: 0 5px 0 1px;
    }

    .window {
        display: flex;
        flex: none;
        align-self: stretch;
        justify-content: flex-end;
        width: 120px;
        height: 18px;
        margin-left: 3px;
        background: #8ecbf1;
    }

    .window button {
        display: flex;
        align-items: flex-start;
        justify-content: center;
        width: 27px;
        height: 18px;
    }

    .window .close {
        width: 39px;
        height: 8px;
        padding-right: 10px;
        background: #7795bd;
    }

    .window svg {
        width: 10px;
        height: 10px;
    }

    .tabs {
        display: flex;
        align-items: flex-end;
        height: 20px;
        padding-left: 4px;
    }

    .tabs button {
        height: 18px;
        padding: 0 10px;
        color: #1a1a1a;
        white-space: nowrap;
    }

    .tabs .active {
        border-radius: 2px 2px 0 0;
        background: linear-gradient(#fff, #ededef);
    }

    .tabs .fold {
        display: flex;
        align-items: center;
        gap: 5px;
        padding: 0 14px;
    }

    .fold b {
        display: flex;
        align-items: center;
        justify-content: center;
        width: 13px;
        height: 7px;
        border: 1px solid #333c46;
        border-radius: 3px;
        background: #f5f5f5;
    }

    /* ribbon */
    .ribbon {
        display: flex;
        flex: none;
        height: 93px;
        background: linear-gradient(#e6e6e6, #c4c4c6 50%, #969696);
        border-bottom: 1px solid #f6f6f6;
    }

    .panel {
        position: relative;
        display: flex;
        flex: none;
        flex-direction: column;
        box-sizing: border-box;
        border-right: 1px solid #c2c2c6;
        background: #fdfdfd;
    }

    .panel .body {
        display: flex;
        flex: 1;
        gap: 10px;
        padding: 3px 6px 0;
    }

    .panel h2 {
        display: flex;
        align-items: center;
        justify-content: center;
        gap: 6px;
        height: 16px;
        margin: 0 1px;
        border-top: 1px solid #dcdcde;
        background: #eeeef0;
        font-size: 12px;
        font-weight: 400;
        color: #333;
    }

    .select {
        width: 47px;
    }

    .panel.select .body {
        padding: 3px 5px 1px 3px;
    }

    .select .big {
        width: 38px;
        height: 72px;
        padding-top: 3px;
        border: 1px solid #1b75c8;
        background: #b7d8f3;
    }

    .dim {
        width: 271px;
    }

    .detail {
        width: 157px;
    }

    .text {
        width: 92px;
    }

    .tag {
        width: 413px;
    }

    .fill {
        width: 111px;
    }

    .symbol {
        width: 92px;
    }

    .launch {
        position: absolute;
        right: 3px;
        width: 7px;
        height: 7px;
    }

    .bigs {
        display: flex;
    }

    .panel.dim .body {
        gap: 9px;
        padding-left: 2px;
    }

    .dim .bigs {
        margin-right: -4px;
    }

    .panel.tag .body {
        padding: 3px 0 0 3px;
    }

    .tag .bigs {
        margin-right: -8px;
    }

    .big {
        display: flex;
        flex: none;
        flex-direction: column;
        align-items: center;
        width: 38px;
        padding-top: 3px;
        line-height: 15px;
        white-space: nowrap;
    }

    .big svg {
        width: 32px;
        height: 32px;
        margin-bottom: 3px;
    }

    .tag .big {
        width: 40px;
    }

    .note {
        display: flex;
        flex: 1;
        justify-content: center;
        border-left: 1px solid #d4d4d8;
    }

    .tools {
        display: grid;
        grid-template-rows: repeat(3, 24px);
    }

    .tool {
        display: flex;
        align-items: center;
        gap: 3px;
        white-space: pre;
        text-align: left;
        color: #333;
    }

    .tool .caret {
        margin-left: 5px;
    }

    .tool:disabled {
        color: #b4b4b8;
    }

    .tool:disabled .icon {
        opacity: 0.35;
    }

    .panel.symbol .body {
        gap: 2px;
        padding: 3px 0 0 1px;
    }

    .grid {
        display: grid;
        grid-template-columns: 24px 24px;
        grid-template-rows: repeat(3, 24px);
        align-items: center;
    }

    .cursor {
        position: absolute;
        left: 79px;
        top: 71px;
        width: 13px;
        height: 20px;
    }

    .options {
        flex: none;
        height: 28px;
        background: #e6e7e8;
    }

    main {
        display: flex;
        flex: 1;
        min-height: 0;
    }

    /* properties palette */
    aside {
        display: flex;
        flex: none;
        flex-direction: column;
        width: 217px;
        margin-right: 4px;
        background: #eeeef0;
        color: #000;
    }

    .caption {
        display: flex;
        align-items: center;
        justify-content: space-between;
        height: 18px;
        padding-right: 5px;
        background: #c0cedd;
        color: #444;
    }

    .caption svg {
        width: 8px;
        height: 8px;
        margin: 1px;
    }

    .type {
        display: flex;
        align-items: center;
        width: 215px;
        height: 73px;
        margin-top: 2px;
        padding: 0 1px;
        border: solid #c8c8cc;
        border-width: 2px 1px 1px 0;
        border-top-color: #77787c;
        background: linear-gradient(#fdfdfd, #ededf0);
    }

    .thumb {
        display: flex;
        align-items: center;
        justify-content: center;
        width: 64px;
        height: 64px;
        border: 1px solid #c8c8cc;
    }

    .thumb svg {
        width: 32px;
        height: 32px;
    }

    .type-name {
        flex: 1;
        padding-left: 4px;
        text-align: left;
    }

    .instance {
        display: flex;
        flex: none;
        align-items: center;
        gap: 6px;
        height: 25px;
    }

    .instance button {
        display: flex;
        align-items: center;
        gap: 3px;
    }

    .pick {
        display: flex;
        align-items: center;
        box-sizing: border-box;
        border: 1px solid #b0b0b4;
        background: #e9e9eb;
    }

    .pick select {
        flex: 1;
        min-width: 0;
        padding-left: 1px;
    }

    .pick .chevron {
        margin: 0 3px;
        pointer-events: none;
    }

    .instance .pick {
        width: 132px;
        height: 23px;
    }

    .list {
        display: flex;
        flex: 1;
        min-height: 0;
    }

    .rows {
        width: 198px;
        overflow: hidden;
        background: #fdfdfd;
    }

    table {
        width: 198px;
        border-collapse: separate;
        border-spacing: 0;
        table-layout: fixed;
    }

    .names {
        width: 98px;
    }

    td,
    th {
        box-sizing: border-box;
        height: 18px;
        padding: 0;
        line-height: 17px;
        white-space: nowrap;
        overflow: hidden;
    }

    td {
        border: dotted #777;
        border-width: 0 1px 1px 0;
    }

    td:first-child {
        padding-left: 6px;
    }

    td:last-child {
        padding-left: 2px;
    }

    td label,
    td output {
        display: block;
        height: 17px;
    }

    .off {
        color: #808080;
    }

    th {
        background: #d9d9da;
        font-weight: 400;
        text-align: left;
    }

    th div {
        display: flex;
        align-items: center;
        justify-content: space-between;
        height: 18px;
        padding-right: 5px;
    }

    th .chevron {
        stroke: #000;
        stroke-width: 1;
    }

    td.button {
        padding: 0 0 0 1px;
    }

    td.input {
        padding: 0;
    }

    .input input {
        display: block;
        width: 99px;
        height: 17px;
        padding-left: 4px;
        border: 1px solid #000;
    }

    .button button {
        display: block;
        width: 98px;
        height: 17px;
        border: 1px solid #aaaab0;
        border-width: 1px 2px 2px 1px;
        background: linear-gradient(#f4f4f6, #e2e2e5);
        line-height: 14px;
    }

    .check input {
        display: block;
        appearance: none;
        width: 13px;
        height: 13px;
        margin: 3px 0 0 2px;
        border: 1px solid #555;
        background: #fff;
    }

    .scroll {
        display: flex;
        flex: none;
        flex-direction: column;
        align-items: center;
        width: 16px;
        background: #eeeef0;
    }

    .scroll .chevron {
        margin: 4px 0;
    }

    .track {
        display: flex;
        flex: 1;
        flex-direction: column;
        width: 100%;
    }

    .thumb-long {
        height: 56%;
        background: #cdcdd0;
    }

    .track.middle {
        justify-content: center;
    }

    .thumb-short {
        height: 17px;
        background: #cdcdd0;
    }

    .foot {
        display: flex;
        flex: none;
        align-items: center;
        justify-content: space-between;
        height: 25px;
        padding-right: 4px;
    }

    .foot a {
        color: #0a63c4;
    }

    .foot button {
        width: 74px;
        height: 19px;
        border: 1px solid #cfcfd2;
        color: #8a8a8e;
    }

    /* drawing view */
    .view {
        display: flex;
        flex: 1;
        flex-direction: column;
        min-width: 0;
        border: solid #6e6f73;
        border-width: 2px 0 0 2px;
    }

    .upper {
        display: flex;
        flex: 1;
        min-height: 0;
    }

    .upper .scroll {
        width: 15px;
    }

    .upper .chevron {
        margin: 6px 0 4px;
    }

    .canvas {
        position: relative;
        flex: 1;
        background: #fdfdfd;
    }

    .pipe {
        position: absolute;
        left: 225px;
        display: flex;
        align-items: center;
        justify-content: center;
        box-sizing: border-box;
        width: 532px;
        height: 21px;
        border: 1px solid #000;
        background: linear-gradient(#9b9b9b, #8a8a8a 40%, #75797d 55%, #4a4a4a 75%, #303030);
    }

    .first {
        top: 178px;
    }

    .second {
        top: 338px;
    }

    .pipe span {
        background: #fdfdfd;
        color: #000;
        font: 43px/38px 'Liberation Sans', sans-serif;
    }

    .view-buttons {
        position: absolute;
        top: 8px;
        right: 3px;
        display: flex;
        gap: 4px;
    }

    .view-buttons svg {
        width: 14px;
        height: 12px;
    }

    .navbar {
        position: absolute;
        top: 28px;
        right: 1px;
        display: flex;
        flex-direction: column;
        align-items: center;
        box-sizing: border-box;
        width: 36px;
        height: 118px;
        border: 2px solid #bcbcc2;
        border-radius: 6px;
        background: #f5f5f7;
    }

    .navbar .caret {
        border-top-color: #8b8b90;
    }

    .navbar button svg {
        width: 26px;
        height: 26px;
        margin-bottom: 3px;
    }

    .navbar button text {
        stroke: none;
    }

    .navbar hr {
        width: 26px;
        margin: 4px 0 8px;
        border: 0;
        border-top: 1px solid #bcbcc2;
    }

    .navbar .zoom svg {
        width: 18px;
        height: 18px;
        margin-bottom: 8px;
    }

    .dot {
        align-self: flex-end;
        width: 10px;
        height: 10px;
        margin-bottom: 10px;
        fill: #b5b5bb;
        stroke: none;
    }

    .dot.end {
        margin: auto 0 0;
    }

    .view-bar {
        display: flex;
        flex: none;
        align-items: center;
        height: 18px;
        background: #eeeef0;
        color: #000;
    }

    .scale {
        width: 58px;
        padding-left: 20px;
        white-space: pre;
    }

    .view-bar button {
        width: 21px;
    }

    .view-bar .chevron {
        margin-left: 2px;
    }

    .h-track {
        display: flex;
        flex: 1;
        justify-content: center;
        height: 16px;
    }

    .h-thumb {
        width: 17px;
        background: #cdcdd0;
    }

    .grip {
        width: 10px;
        height: 10px;
        margin: 6px 0 0 9px;
    }

    /* status bar */
    footer {
        display: flex;
        flex: none;
        align-items: flex-start;
        box-sizing: border-box;
        height: 18px;
        padding-top: 4px;
        border-top: 1px solid #8f8f92;
        background: #d6d6d8;
        overflow: hidden;
    }

    footer button {
        flex: none;
        width: 26px;
        padding-left: 2px;
    }

    footer .pick {
        flex: none;
        height: 20px;
        background: #fdfdfd;
        color: #777;
    }

    footer .chevron {
        stroke: #aaa;
    }

    .message {
        width: 371px;
    }

    .workset {
        width: 207px;
        margin-right: 6px;
    }

    .model {
        width: 157px;
    }

    footer .count {
        display: flex;
        width: 51px;
    }

    .selection {
        display: flex;
        flex: 1;
        justify-content: flex-end;
        padding-right: 58px;
    }
</style>
